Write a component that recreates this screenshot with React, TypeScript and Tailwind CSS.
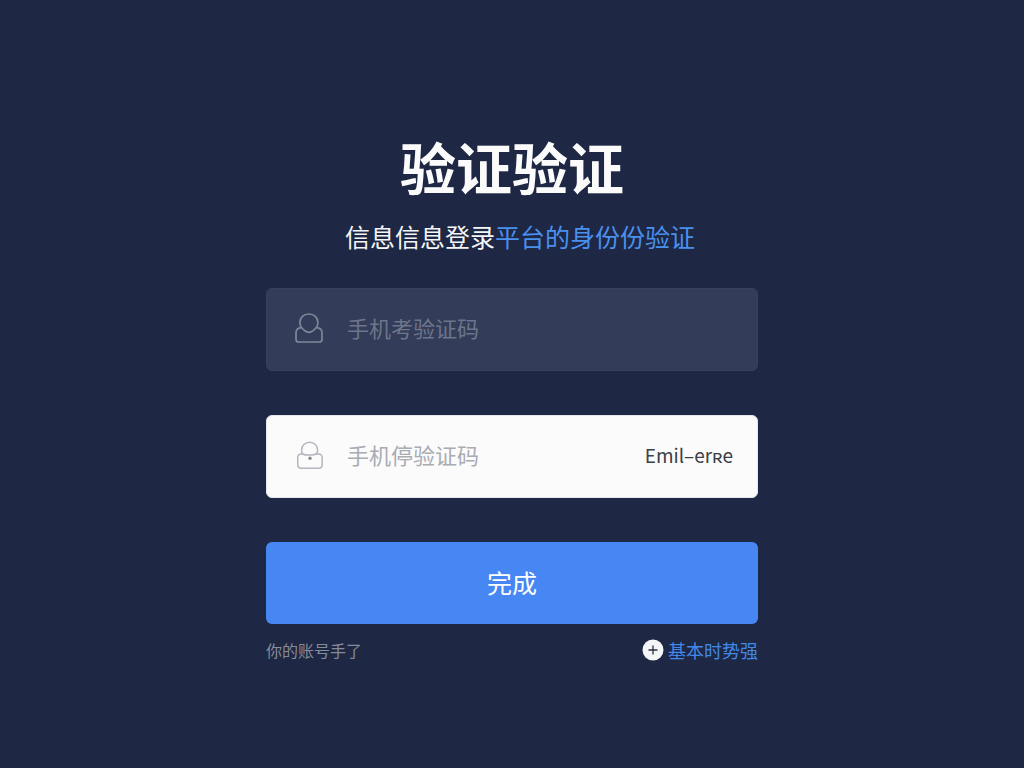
import { useState } from "react";
import type { FormEvent } from "react";

function UserIcon() {
  return (
    <svg className="h-[30px] w-7 shrink-0 text-[#7f8699]" viewBox="0 0 28 30" fill="none" stroke="currentColor" strokeWidth={1.7} strokeLinejoin="round" aria-hidden="true">
      <path d="M13.9 1C8.7 1 4.9 4.7 4.9 9.6C4.9 13.2 7 15.7 9.6 17.6C12.4 19.8 15.4 19.8 18.2 17.6C20.8 15.7 22.9 13.2 22.9 9.6C22.9 4.7 19.1 1 13.9 1Z" />
      <path d="M6.4 14.7C3 14.9 1 16.9 1 20V26.2C1 28 2 29 3.8 29H24.2C26 29 27 28 27 26.2V20C27 16.9 25 14.9 21.5 14.7" />
    </svg>
  );
}

function LockIcon() {
  return (
    <svg className="h-[30px] w-7 shrink-0 text-[#b4b7bd]" viewBox="0 0 28 30" fill="none" stroke="currentColor" strokeWidth={1.5} strokeLinecap="round" aria-hidden="true">
      <path d="M7.8 14C6.8 12.8 6.6 11.5 6.6 10C6.6 5.7 10 2.2 14.6 2.2C19.2 2.2 22.6 5.7 22.6 10C22.6 11.5 22.4 12.8 21.4 14" />
      <path d="M7.8 14H6.5C4 14 2.7 15.5 2.7 18V24.5C2.7 27 4 28.3 6.5 28.3H23.5C26 28.3 27.2 27 27.2 24.5V18C27.2 15.5 26 14 23.5 14H21.4C19 15.4 10 15.4 7.8 14Z" />
      <circle cx="15" cy="18.3" r="1.7" fill="#85888f" stroke="none" />
    </svg>
  );
}

function PlusBadge() {
  return (
    <svg className="h-[22px] w-[22px] shrink-0" viewBox="0 0 22 22" aria-hidden="true">
      <circle cx="11" cy="11" r="10.5" fill="#f4f5f7" />
      <path d="M11 6.5V15.5M6.5 11H15.5" stroke="#2a3040" strokeWidth={1.3} />
    </svg>
  );
}

export default function App() {
  const [account, setAccount] = useState("");
  const [code, setCode] = useState("");

  const handleSubmit = (e: FormEvent) => {
    e.preventDefault();
  };

  return (
    <main className="min-h-screen bg-[#1e2743] px-6 pt-[130px] pb-12 font-['Noto_Sans_CJK_SC',sans-serif]">
      <div className="mx-auto w-full max-w-[492px]">
        <header className="text-center">
          <h1 className="text-[56px] leading-[72px] font-bold text-[#fbfbfc]">验证验证</h1>
          <p className="mt-4 pl-4 text-[25px] leading-9 text-[#f4f5f8]">
            信息信息登录<span className="text-[#4a90ee]">平台的身份份验证</span>
          </p>
        </header>

        <form onSubmit={handleSubmit} className="mt-[34px] flex flex-col gap-11">
          <label className="flex items-center gap-6 rounded-md border border-[#38415c] bg-[#333c58] px-7 pt-[22px] pb-[26px]">
            <UserIcon />
            <input
              type="text"
              value={account}
              onChange={(e) => setAccount(e.target.value)}
              placeholder="手机考验证码"
              className="min-w-0 flex-1 bg-transparent text-[22px] leading-[33px] text-[#d5d9e3] outline-none placeholder:text-[#6d758b]"
            />
          </label>

          <div className="flex items-center rounded-md border border-[#e6e8ee] bg-[#fbfbfc] pt-[22px] pr-6 pb-[26px] pl-7">
            <label className="flex min-w-0 flex-1 items-center gap-6">
              <LockIcon />
              <input
                type="text"
                value={code}
                onChange={(e) => setCode(e.target.value)}
                placeholder="手机停验证码"
                className="min-w-0 flex-1 bg-transparent text-[22px] leading-[33px] text-[#3b4048] outline-none placeholder:text-[#a9acb2]"
              />
            </label>
            <button type="button" className="text-[19px] leading-[33px] whitespace-nowrap text-[#3b4048]">
              Emil–erʀe
            </button>
          </div>

          <button type="submit" className="rounded-md bg-[#4787f3] pt-[23px] pb-[25px] text-[25px] leading-[34px] text-white">
            完成
          </button>
        </form>

        <footer className="mt-3.5 flex items-center justify-between leading-6">
          <span className="text-base text-[#858b9b]">你的账号手了</span>
          <a href="#" className="flex items-center gap-1 text-lg leading-6 text-[#4388e6]">
            <PlusBadge />
            基本时势强
          </a>
        </footer>
      </div>
    </main>
  );
}
